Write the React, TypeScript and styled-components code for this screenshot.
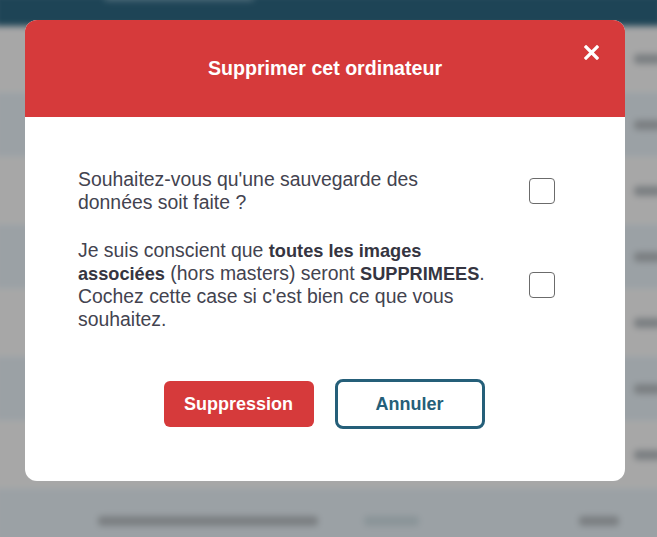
import React from "react";
import styled, { createGlobalStyle } from "styled-components";

const Global = createGlobalStyle`
  html, body { margin: 0; padding: 0; width: 657px; height: 537px; overflow: hidden; }
  body { font-family: "Liberation Sans", Arial, sans-serif; background: #a5a5a5; }
`;

const Page = styled.div`
  position: relative;
  width: 657px;
  height: 537px;
  overflow: hidden;
`;

const Backdrop = styled.div`
  display: flex;
  flex-direction: column;
  filter: blur(3px);
  margin: -6px;
`;

const TopBar = styled.div`
  height: 32px;
  background: #1e4456;
  display: flex;
  align-items: center;
  padding-left: 110px;
`;

const TopBarText = styled.span`
  display: block;
  width: 150px;
  height: 8px;
  margin-top: -26px;
  background: #4d6a78;
  border-radius: 4px;
`;

const Row = styled.div<{ $alt: boolean }>`
  height: 65px;
  background: ${(p) => (p.$alt ? "#9ba1a5" : "#a7a7a7")};
  display: flex;
  align-items: center;
  border-bottom: 1px solid #b0b0b0;
`;

const Cell = styled.span<{ $w: number; $ml: number; $c?: string }>`
  display: block;
  width: ${(p) => p.$w}px;
  height: 10px;
  margin-left: ${(p) => p.$ml}px;
  background: ${(p) => p.$c || "#7b7f82"};
  border-radius: 4px;
`;

const Overlay = styled.div`
  position: absolute;
  inset: 0;
  padding: 20px 0 0 25px;
`;

const Modal = styled.div`
  width: 600px;
  background: #ffffff;
  border-radius: 12px;
  overflow: hidden;
  display: flex;
  flex-direction: column;
`;

const Header = styled.div`
  position: relative;
  height: 97px;
  background: #d63a3b;
  display: flex;
  align-items: center;
  justify-content: center;
`;

const Title = styled.h2`
  margin: 0;
  color: #ffffff;
  font-size: 19.6px;
  font-weight: 700;
  font-family: "Liberation Sans", Arial, sans-serif;
`;

const Close = styled.button`
  position: absolute;
  top: 22px;
  right: 24px;
  width: 20px;
  height: 20px;
  padding: 0;
  border: none;
  background: transparent;
  display: flex;
  align-items: center;
  justify-content: center;
  cursor: pointer;
`;

const Body = styled.div`
  padding: 51px 70px 52px 53px;
  display: flex;
  flex-direction: column;
`;

const Question = styled.div`
  display: flex;
  align-items: center;
  justify-content: space-between;
  & + & { margin-top: 25px; }
`;

const Text = styled.p`
  margin: 0;
  width: 410px;
  font-size: 19.4px;
  line-height: 23px;
  color: #43434f;
`;

const Strong = styled.b`
  font-weight: 700;
  font-size: 18.2px;
  line-height: 1;
  color: #353541;
`;

const Box = styled.span`
  display: block;
  width: 24px;
  height: 24px;
  border: 1.5px solid #6b6b6b;
  border-radius: 4px;
  flex-shrink: 0;
`;

const Actions = styled.div`
  margin-top: 48px;
  padding-left: 15px;
  display: flex;
  justify-content: center;
  align-items: center;
  gap: 21px;
`;

const Button = styled.button<{ $primary?: boolean }>`
  width: 150px;
  height: ${(p) => (p.$primary ? "46px" : "50px")};
  border-radius: ${(p) => (p.$primary ? "6px" : "8px")};
  border: ${(p) => (p.$primary ? "none" : "3px solid #255f79")};
  background: ${(p) => (p.$primary ? "#d63a3b" : "#ffffff")};
  color: ${(p) => (p.$primary ? "#ffffff" : "#255f79")};
  font-family: "Liberation Sans", Arial, sans-serif;
  font-weight: 700;
  font-size: 18px;
  cursor: pointer;
`;

const rows = [0, 1, 2, 3, 4, 5, 6, 7];

export default function App() {
  return (
    <Page>
      <Global />
      <Backdrop>
        <TopBar>
          <TopBarText />
        </TopBar>
        {rows.map((i) => (
          <Row key={i} $alt={i % 2 === 1}>
            {i === 7 ? (
              <>
                <Cell $w={220} $ml={104} />
                <Cell $w={55} $ml={46} $c="#8a9498" />
                <Cell $w={40} $ml={160} />
              </>
            ) : (
              <Cell $w={40} $ml={640} />
            )}
          </Row>
        ))}
      </Backdrop>
      <Overlay>
        <Modal>
          <Header>
            <Title>Supprimer cet ordinateur</Title>
            <Close aria-label="Fermer">
              <svg width="15" height="15" viewBox="0 0 15 15">
                <path d="M2 2 L13 13 M13 2 L2 13" stroke="#fff" strokeWidth="3.2" strokeLinecap="square" />
              </svg>
            </Close>
          </Header>
          <Body>
            <Question>
              <Text>Souhaitez-vous qu'une sauvegarde des données soit faite ?</Text>
              <Box />
            </Question>
            <Question>
              <Text>
                Je suis conscient que <Strong>toutes les images associées</Strong> (hors masters) seront{" "}
                <Strong>SUPPRIMEES</Strong>. Cochez cette case si c'est bien ce que vous souhaitez.
              </Text>
              <Box />
            </Question>
            <Actions>
              <Button $primary>Suppression</Button>
              <Button>Annuler</Button>
            </Actions>
          </Body>
        </Modal>
      </Overlay>
    </Page>
  );
}
